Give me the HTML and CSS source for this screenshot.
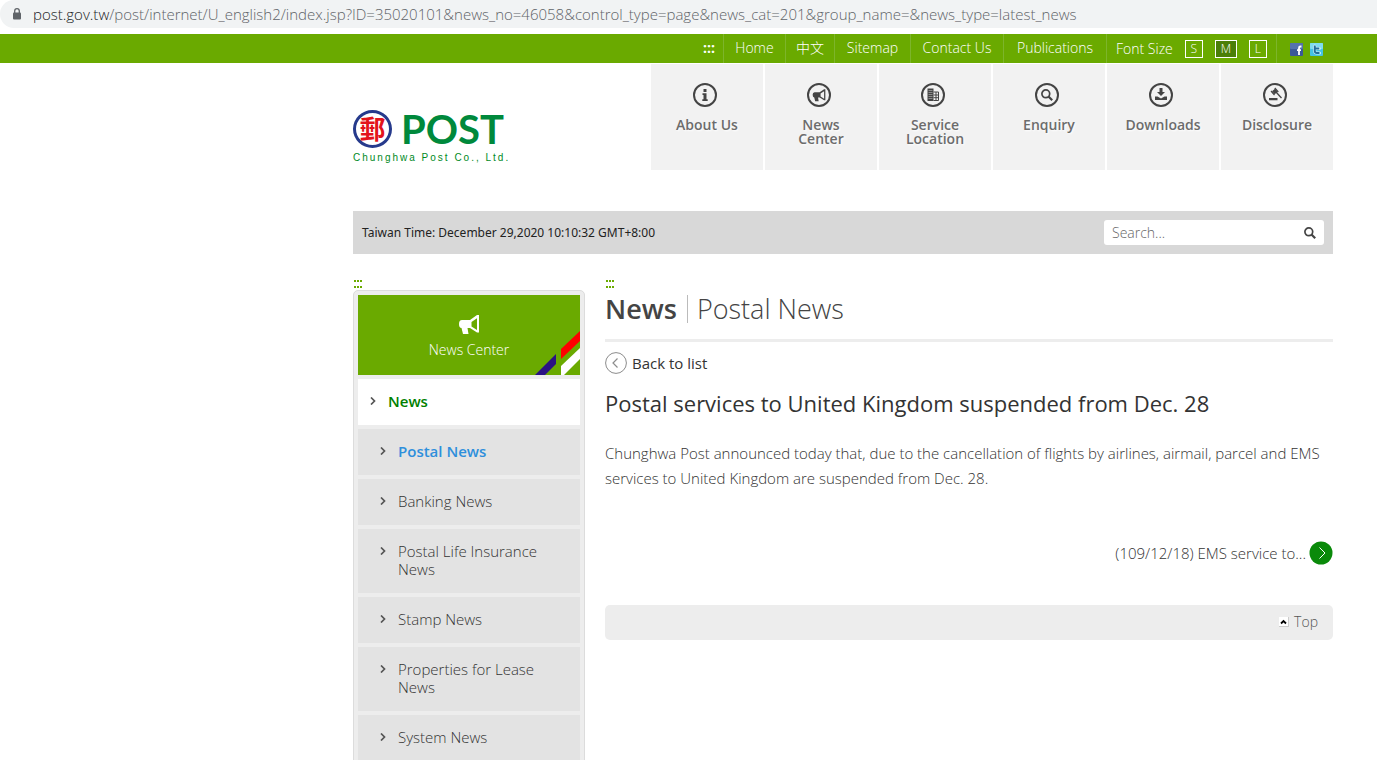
FILE: index.html
```html
<!DOCTYPE html>
<html lang="en">
<head>
<meta charset="utf-8">
<title>Chunghwa Post - Postal News</title>
<link rel="stylesheet" href="styles.css">
</head>
<body>
<svg class="defs" aria-hidden="true">
  <symbol id="horn" viewBox="0 0 22 20">
    <path fill="currentColor" fill-rule="evenodd" d="M21 0v17.500h-2L12 13H9.500l1 6H5l-1.500-6Q1 13 1 9T4 5h8l7-5zM19 3.200l-5.500 3.800v4.400L19 15z"/>
  </symbol>
  <symbol id="lens" viewBox="0 0 12 12">
    <circle cx="4.800" cy="4.800" r="3.900" fill="none" stroke="currentColor" stroke-width="1.700"/>
    <path d="M7.500 7.500l3.700 3.700" stroke="currentColor" stroke-width="2.200"/>
  </symbol>
  <symbol id="chev" viewBox="0 0 6 8">
    <path d="M1 .5L4.500 4L1 7.500" fill="none" stroke="currentColor" stroke-width="1.700"/>
  </symbol>
</svg>
<div class="address">
  <div class="address-field">
    <svg class="lock" viewBox="0 0 10 12" aria-hidden="true"><rect x="1" y="4.500" width="8" height="7" rx="1" fill="#5f6368"/><path d="M2.700 5V3a2.300 2.300 0 0 1 4.600 0v2" fill="none" stroke="#5f6368" stroke-width="1.300"/></svg>
    <span class="url"><span class="host">post.gov.tw</span>/post/internet/U_english2/index.jsp?ID=35020101&amp;news_no=46058&amp;control_type=page&amp;news_cat=201&amp;group_name=&amp;news_type=latest_news</span>
  </div>
</div>
<nav class="topbar" aria-label="Utility">
  <div class="topbar-items">
    <a class="access" href="#">:::</a>
    <a href="#">Home</a>
    <a href="#" lang="zh-Hant">中文</a>
    <a href="#">Sitemap</a>
    <a href="#">Contact Us</a>
    <a href="#">Publications</a>
    <div class="sizes"><span>Font Size</span><button class="size">S</button><button class="size size-on">M</button><button class="size">L</button></div>
    <div class="social">
      <a href="#" aria-label="Facebook"><svg viewBox="0 0 13 13"><rect width="13" height="13" rx="1" fill="#3b5998"/><rect width="13" height="6" rx="1" fill="#5572ad"/><path d="M11.500 3.500h-1q-1.500 0-1.500 1.500v7M7 7.200h4" fill="none" stroke="#fff" stroke-width="1.800"/></svg></a>
      <a href="#" aria-label="Twitter"><svg viewBox="0 0 13 13"><rect width="13" height="13" rx="1" fill="#45c3e6"/><rect width="13" height="6" rx="1" fill="#7fdcf0"/><path d="M4.800 3v5q0 2 2 2H9.500M4.800 5.500h4.500" fill="none" stroke="#d8f4fb" stroke-width="3" stroke-linecap="round"/><path d="M4.800 2.500v5.500q0 2 2 2H9.500M4.800 5.500h4.500" fill="none" stroke="#236f9d" stroke-width="1.900"/></svg></a>
    </div>
  </div>
</nav>
<div class="page">
  <header class="header">
    <a class="logo" href="#">
      <span class="logo-row">
        <span class="seal" lang="zh-Hant">郵</span>
        <span class="logo-word">POST</span>
      </span>
      <span class="logo-sub">Chunghwa Post Co., Ltd.</span>
    </a>
    <nav class="mainnav" aria-label="Main">
      <a href="#"><svg viewBox="0 0 24 24"><circle class="ring" cx="12" cy="12" r="11"/><path fill="currentColor" d="M10.500 6h3v3h-3zM9.500 10.300h4v6h1.200v1.700H9.300v-1.700h1.200V12h-1z"/></svg><span>About Us</span></a>
      <a href="#"><svg viewBox="0 0 24 24"><circle class="ring" cx="12" cy="12" r="11"/><use href="#horn" x="5" y="6" width="14" height="13"/></svg><span>News Center</span></a>
      <a href="#"><svg viewBox="0 0 24 24"><circle class="ring" cx="12" cy="12" r="11"/><path fill="currentColor" d="M6.500 5.500h6V18h-6z"/><path stroke="#aaa" stroke-width=".7" d="M7.500 7.500h4M7.500 9.500h4M7.500 11.500h4M7.500 13.500h4M7.500 15.500h4"/><path fill="none" stroke="currentColor" d="M12.500 9h5v8.500h-5M15 9v8.500M12.500 12h5M12.500 14.700h5"/></svg><span>Service Location</span></a>
      <a href="#"><svg viewBox="0 0 24 24"><circle class="ring" cx="12" cy="12" r="11"/><use href="#lens" x="6" y="6" width="12" height="12"/></svg><span>Enquiry</span></a>
      <a href="#"><svg viewBox="0 0 24 24"><circle class="ring" cx="12" cy="12" r="11"/><path fill="currentColor" d="M10.500 5h3v4H16l-4 4-4-4h2.500zM6 13.500h2.500l3.500 2 3.500-2H18V17H6z"/></svg><span>Downloads</span></a>
      <a href="#"><svg viewBox="0 0 24 24"><circle class="ring" cx="12" cy="12" r="11"/><path fill="currentColor" d="M6 15h8.500v2.300H6zM9 8.300l3-2.500 2.700 3-3 2.500z"/><path d="M12.500 8.500l6 6.500" stroke="currentColor" stroke-width="1.300"/><path d="M8 8l3.500 4M11.800 5l3.500 4" stroke="currentColor" stroke-width="1.200"/></svg><span>Disclosure</span></a>
    </nav>
  </header>
  <div class="toolbar">
    <span>Taiwan Time: December 29,2020 10:10:32 GMT+8:00</span>
    <form class="search">
      <input type="text" placeholder="Search..." aria-label="Search">
      <button type="button" aria-label="Submit search"><svg viewBox="0 0 12 12"><use href="#lens" width="12" height="12"/></svg></button>
    </form>
  </div>
  <div class="columns">
    <aside class="side">
      <a class="marker" href="#" aria-label="Side area"><svg viewBox="0 0 8 8"><path d="M0 0h2v2H0zM3 0h2v2H3zM6 0h2v2H6zM0 6h2v2H0zM3 6h2v2H3zM6 6h2v2H6z" fill="#6aaa00"/></svg></a>
      <div class="menu">
        <h2 class="menu-head">
          <svg class="menu-icon" viewBox="0 0 22 20"><use href="#horn" width="22" height="20"/></svg>
          <span>News Center</span>
          <svg class="stripes" viewBox="0 0 46 44" aria-hidden="true"><path fill="#2b1284" d="M1 44L22 23v10L11 44z"/><path fill="#f00" d="M27 18L46 0v10L27 28z"/><path fill="#fff" d="M27 35L46 17v11L30 44h-3z"/></svg>
        </h2>
        <a class="item item-main" href="#"><svg viewBox="0 0 6 8"><use href="#chev" width="6" height="8"/></svg><span>News</span></a>
        <a class="item item-on" href="#"><svg viewBox="0 0 6 8"><use href="#chev" width="6" height="8"/></svg><span>Postal News</span></a>
        <a class="item" href="#"><svg viewBox="0 0 6 8"><use href="#chev" width="6" height="8"/></svg><span>Banking News</span></a>
        <a class="item" href="#"><svg viewBox="0 0 6 8"><use href="#chev" width="6" height="8"/></svg><span>Postal Life Insurance News</span></a>
        <a class="item" href="#"><svg viewBox="0 0 6 8"><use href="#chev" width="6" height="8"/></svg><span>Stamp News</span></a>
        <a class="item" href="#"><svg viewBox="0 0 6 8"><use href="#chev" width="6" height="8"/></svg><span>Properties for Lease News</span></a>
        <a class="item" href="#"><svg viewBox="0 0 6 8"><use href="#chev" width="6" height="8"/></svg><span>System News</span></a>
      </div>
    </aside>
    <main class="main">
      <a class="marker" href="#" aria-label="Main area"><svg viewBox="0 0 8 8"><path d="M0 0h2v2H0zM3 0h2v2H3zM6 0h2v2H6zM0 6h2v2H0zM3 6h2v2H3zM6 6h2v2H6z" fill="#6aaa00"/></svg></a>
      <h1 class="title"><span class="title-main">News</span><span class="title-sub">Postal News</span></h1>
      <a class="back" href="#"><svg viewBox="0 0 22 22"><circle cx="11" cy="11" r="10.400" fill="none" stroke="#8c8c8c"/><path d="M12.500 6.500L8 11l4.500 4.500" fill="none" stroke="#8c8c8c" stroke-width="1.200"/></svg>Back to list</a>
      <h2 class="headline">Postal services to United Kingdom suspended from Dec. 28</h2>
      <p class="body">Chunghwa Post announced today that, due to the cancellation of flights by airlines, airmail, parcel and EMS services to United Kingdom are suspended from Dec. 28.</p>
      <a class="next" href="#">(109/12/18) EMS service to...<svg viewBox="0 0 24 24"><circle cx="12" cy="12" r="11.500" fill="#0a8a0a"/><path d="M10.500 6.500l5.500 5.500-5.500 5.500" fill="none" stroke="#fff"/></svg></a>
      <div class="footer"><a class="top" href="#"><svg viewBox="0 0 10 10"><rect width="10" height="10" fill="#ccc"/><rect width="9" height="9" fill="#fff"/><path d="M2 6.500L4.500 4 7 6.500" fill="none" stroke="#000" stroke-width="1.800"/></svg>Top</a></div>
    </main>
  </div>
</div>
</body>
</html>
```
FILE: styles.css
```css
* { box-sizing: border-box; }
body {
  margin: 0;
  height: 100vh;
  overflow: hidden;
  background: #fff;
  color: #333;
  font: 300 15px/18px "Open Sans", "Noto Sans CJK TC", sans-serif;
}
a { color: inherit; text-decoration: none; }
h1, h2, p { margin: 0; font-weight: 300; }
svg { display: block; flex: none; }
button { padding: 0; border: 0; background: none; font: inherit; color: inherit; }
.defs { position: absolute; width: 0; height: 0; }

.address { height: 34px; }
.address-field {
  display: flex;
  align-items: center;
  gap: 11px;
  height: 28px;
  padding-left: 12px;
  border-radius: 14px 0 0 14px;
  background: #f1f3f4;
  color: #5f6368;
  white-space: nowrap;
}
.lock { width: 10px; height: 12px; }
.host { color: #202124; }

.topbar {
  display: flex;
  justify-content: flex-end;
  height: 29px;
  padding-right: 44px;
  background: #6aaa00;
  color: #fff;
  font-size: 14px;
}
.topbar-items {
  display: grid;
  grid-template-columns: 29px 62px 49px 76px 93px 103px 170px 56px;
  white-space: nowrap;
}
.topbar-items > * {
  display: flex;
  align-items: center;
  justify-content: center;
  padding-bottom: 1px;
  border-right: 1px solid #7db52b;
}
.topbar-items > .access { font-weight: 700; }
.topbar-items > .sizes { justify-content: space-between; padding: 0 9px; }
.size { height: 18px; padding: 0 5px; border: 1px solid #fff; font-size: 12px; line-height: 16px; }
.size-on { background: #4b7f08; }
.topbar-items > .social { border: 0; justify-content: flex-start; gap: 7px; padding: 2px 0 0 13px; }
.social svg { width: 13px; height: 13px; }

.page { max-width: 1024px; margin-left: auto; padding-right: 44px; }
.header { display: flex; justify-content: space-between; }
.logo { display: block; padding-top: 47px; }
.logo-row { display: flex; align-items: center; gap: 9px; height: 38px; }
.seal {
  width: 39px;
  height: 38px;
  border: 3px solid #263a8c;
  border-radius: 50%;
  color: #e3141b;
  font: 700 26px/30px "Noto Sans CJK TC", sans-serif;
  text-align: center;
}
.logo-word { color: #00893c; font: 700 40px/38px Lato, sans-serif; }
.logo-sub { display: block; padding-top: 3px; color: #008a1e; font: 10px/14px "Liberation Sans", sans-serif; letter-spacing: 2px; }
.mainnav {
  display: grid;
  grid-template-columns: repeat(6, 112px);
  gap: 2px;
  padding-top: 1px;
  color: #444;
}
.mainnav a {
  display: flex;
  flex-direction: column;
  align-items: center;
  height: 106px;
  padding: 19px 20px 0;
  background: #f2f2f2;
  text-align: center;
}
.mainnav svg { width: 24px; height: 24px; margin-right: 4px; }
.mainnav span { padding-top: 11px; color: #6c6c6c; font-size: 14px; font-weight: 600; line-height: 14px; text-shadow: 1px 1px 2px #fff; }
.ring { fill: none; stroke: #444; stroke-width: 2; }

.toolbar {
  display: flex;
  align-items: center;
  justify-content: space-between;
  height: 43px;
  margin-top: 41px;
  padding: 0 9px;
  background: #d8d8d8;
  color: #222;
  font: 400 12px/18px "Noto Sans", sans-serif;
}
.search { display: flex; align-items: center; width: 220px; height: 25px; padding: 0 8px; border-radius: 3px; background: #fff; color: #444; }
.search input { flex: 1; min-width: 0; padding: 0; border: 0; outline: 0; background: none; font: 300 14px/20px "Open Sans", sans-serif; }
.search input::placeholder { color: #666; opacity: 1; }
.search svg { width: 12px; height: 12px; }

.columns { display: flex; gap: 20px; padding-top: 26px; }
.side { flex: 0 0 232px; }
.marker { display: block; height: 10px; padding: 0 1px; }
.marker svg { width: 8px; height: 8px; }
.menu {
  display: flex;
  flex-direction: column;
  gap: 4px;
  padding: 4px;
  border: 1px solid #dcdcdc;
  border-radius: 5px;
  background: #ededed;
}
.menu-head {
  position: relative;
  display: flex;
  flex-direction: column;
  align-items: center;
  gap: 6px;
  height: 80px;
  padding-top: 20px;
  background: #6aaa00;
  color: #fff;
  font-size: 14px;
}
.menu-icon { width: 22px; height: 20px; }
.stripes { position: absolute; right: 0; bottom: 0; width: 46px; height: 44px; }
.item { display: flex; gap: 12px; padding: 13px 40px 15px 22px; background: #e3e3e3; }
.item svg { width: 6px; height: 8px; margin-top: 5px; color: #555; }
.item-main { padding-left: 12px; background: #fff; color: #008000; font-weight: 600; }
.item-on { color: #2e8fdc; font-weight: 600; }

.main { flex: 1; min-width: 0; }
.title {
  display: flex;
  align-items: center;
  gap: 10px;
  height: 52px;
  padding-bottom: 11px;
  border-bottom: 3px solid #ededed;
  color: #444;
  font-size: 27px;
  line-height: 28px;
}
.title-main { font-weight: 600; }
.title-sub { padding-left: 9px; border-left: 1px solid #bbb; }
.back { display: flex; align-items: center; gap: 5px; height: 22px; margin-top: 10px; font-weight: 400; }
.back svg { width: 22px; height: 22px; }
.headline { padding-top: 15px; font-size: 22px; font-weight: 400; line-height: 28px; }
.body { padding-top: 24px; line-height: 25px; }
.next { display: flex; align-items: center; justify-content: flex-end; gap: 3px; padding-top: 50px; }
.next svg { width: 24px; height: 24px; }
.footer { display: flex; justify-content: flex-end; height: 35px; margin-top: 40px; padding: 5px 15px 7px; border-radius: 5px; background: #ededed; }
.top { display: flex; align-items: center; gap: 5px; color: #555; font-size: 14px; }
.top svg { width: 10px; height: 10px; }
```
